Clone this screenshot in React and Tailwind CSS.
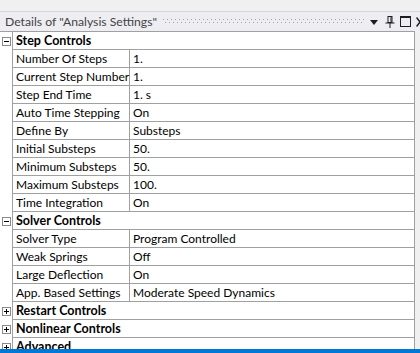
import React from "react";

const sections = [
  {
    title: "Step Controls",
    open: true,
    rows: [
      ["Number Of Steps", "1."],
      ["Current Step Number", "1."],
      ["Step End Time", "1. s"],
      ["Auto Time Stepping", "On"],
      ["Define By", "Substeps"],
      ["Initial Substeps", "50."],
      ["Minimum Substeps", "50."],
      ["Maximum Substeps", "100."],
      ["Time Integration", "On"],
    ],
  },
  {
    title: "Solver Controls",
    open: true,
    rows: [
      ["Solver Type", "Program Controlled"],
      ["Weak Springs", "Off"],
      ["Large Deflection", "On"],
      ["App. Based Settings", "Moderate Speed Dynamics"],
    ],
  },
  { title: "Restart Controls", open: false, rows: [] },
  { title: "Nonlinear Controls", open: false, rows: [] },
  { title: "Advanced", open: false, rows: [] },
];

function ToggleBox({ open }) {
  return (
    <svg width="9" height="9" viewBox="0 0 9 9" className="block">
      <rect x="0.5" y="0.5" width="8" height="8" fill="#fff" stroke="#8a8a8a" />
      <line x1="2" y1="4.5" x2="7" y2="4.5" stroke="#000" />
      {!open && <line x1="4.5" y1="2" x2="4.5" y2="7" stroke="#000" />}
    </svg>
  );
}

export default function App() {
  return (
    <div
      className="w-[420px] h-[353px] overflow-hidden bg-[#f0f0f0] flex flex-col relative"
      style={{ fontFamily: 'Lato, "Noto Sans", sans-serif' }}
    >
      <div className="h-[12px] shrink-0 bg-[#f0f0f0] border-b border-[#d4d4dc]" />
      <div className="h-[19px] shrink-0 bg-[#eeeef2] flex items-center pl-[5px] text-[12.2px] text-[#444] leading-[19px]">
        <span className="whitespace-nowrap">Details of "Analysis Settings"</span>
        <div className="ml-[6px] flex-1 h-[6px] relative">
          <div
            className="absolute left-0 right-0 top-0 h-[2px]"
            style={{
              backgroundImage: "linear-gradient(to right, #a0a0aa 1px, transparent 1px)",
              backgroundSize: "4px 1px",
              backgroundRepeat: "repeat-x",
            }}
          />
          <div
            className="absolute left-[2px] right-0 top-[3px] h-[1px]"
            style={{
              backgroundImage: "linear-gradient(to right, #a0a0aa 1px, transparent 1px)",
              backgroundSize: "4px 1px",
              backgroundRepeat: "repeat-x",
            }}
          />
        </div>
        <svg width="10" height="6" viewBox="0 0 10 6" className="ml-[5px] mt-[2px] shrink-0">
          <polygon points="1,0 9,0 5,5" fill="#1e1e1e" />
        </svg>
        <svg width="10" height="12" viewBox="0 0 10 12" className="ml-[6px] shrink-0">
          <rect x="3" y="0.5" width="4" height="6" fill="none" stroke="#1e1e1e" />
          <line x1="0.5" y1="7" x2="9.5" y2="7" stroke="#1e1e1e" />
          <line x1="5" y1="7" x2="5" y2="12" stroke="#1e1e1e" />
          <line x1="6" y1="1" x2="6" y2="6" stroke="#1e1e1e" />
        </svg>
        <svg width="11" height="11" viewBox="0 0 11 11" className="ml-[5px] shrink-0">
          <rect x="0.5" y="0.5" width="10" height="10" fill="none" stroke="#1e1e1e" />
          <line x1="0.5" y1="1.5" x2="10.5" y2="1.5" stroke="#1e1e1e" />
        </svg>
        <svg width="8" height="10" viewBox="0 0 8 10" className="ml-[5px] shrink-0 mr-[-4px]">
          <path d="M0.5 0.5 L7.5 9.5 M7.5 0.5 L0.5 9.5" stroke="#1e1e1e" strokeWidth="1.5" />
        </svg>
      </div>
      <div className="flex-1 flex bg-[#f0f0f0]">
        <div className="w-[415px] bg-white border-t border-r border-[#a0a0a0] flex flex-col text-[12px] text-black leading-[17px]">
          {sections.map((s) => (
            <React.Fragment key={s.title}>
              <div className="flex h-[18px] shrink-0">
                <div className="w-[13px] bg-white flex items-center justify-center pl-[1px] border-r border-[#a0a0a0]">
                  <ToggleBox open={s.open} />
                </div>
                <div className="flex-1 border-b border-[#a0a0a0] pl-[3px] font-bold text-[12.5px]">
                  {s.title}
                </div>
              </div>
              {s.rows.map(([k, v]) => (
                <div key={k} className="flex h-[18px] shrink-0">
                  <div className="w-[13px] bg-white border-r border-[#a0a0a0]" />
                  <div className="w-[117px] border-b border-r border-[#a0a0a0] pl-[3px] whitespace-nowrap">
                    {k}
                  </div>
                  <div className="flex-1 border-b border-[#a0a0a0] pl-[3px] whitespace-nowrap">
                    {v}
                  </div>
                </div>
              ))}
            </React.Fragment>
          ))}
        </div>
      </div>
      <div className="absolute left-0 right-0 bottom-0 h-[4px] bg-[#0078d7]" />
    </div>
  );
}
